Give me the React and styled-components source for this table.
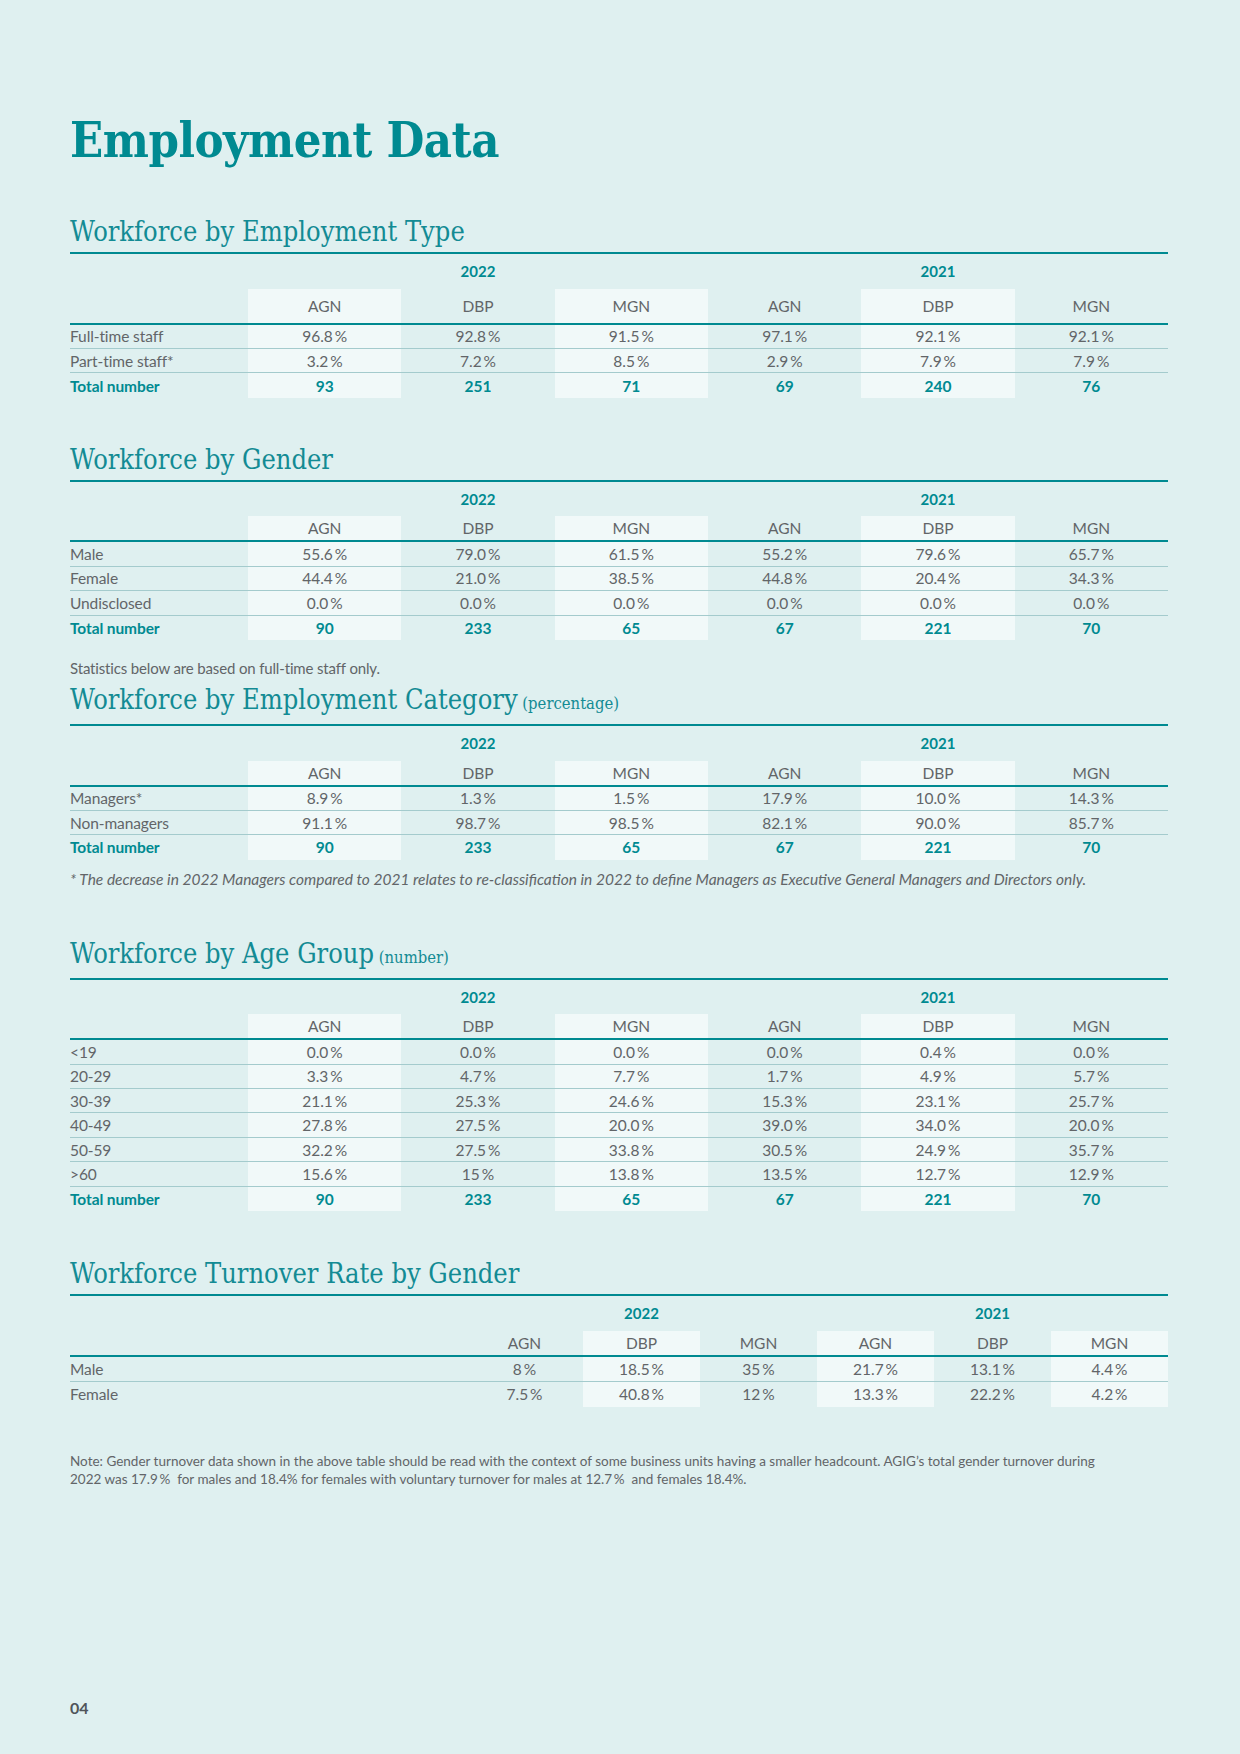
import React from 'react';
import styled, { createGlobalStyle } from 'styled-components';

const TEAL = '#008a91';
const TEXT = '#626568';

const GlobalStyle = createGlobalStyle`
  html, body {
    margin: 0;
    padding: 0;
    background: #dff0f0;
  }
  body {
    font-family: Lato, "Open Sans", sans-serif;
    -webkit-font-smoothing: antialiased;
  }
`;

const pct = (v) => `${v}\u2009%`;

const STD_COLS = '178px repeat(6, 1fr)';
const WIDE_COLS = '396px repeat(6, 1fr)';

const sections = [
  {
    gap: 49,
    title: 'Workforce by Employment Type',
    headH: 36,
    rows: [
      ['Full-time staff', ['96.8', '92.8', '91.5', '97.1', '92.1', '92.1'].map(pct)],
      ['Part-time staff*', ['3.2', '7.2', '8.5', '2.9', '7.9', '7.9'].map(pct)],
    ],
    total: ['93', '251', '71', '69', '240', '76'],
  },
  {
    gap: 47,
    title: 'Workforce by Gender',
    rows: [
      ['Male', ['55.6', '79.0', '61.5', '55.2', '79.6', '65.7'].map(pct)],
      ['Female', ['44.4', '21.0', '38.5', '44.8', '20.4', '34.3'].map(pct)],
      ['Undisclosed', ['0.0', '0.0', '0.0', '0.0', '0.0', '0.0'].map(pct)],
    ],
    total: ['90', '233', '65', '67', '221', '70'],
  },
  {
    gap: 19,
    lead: 'Statistics below are based on full-time staff only.',
    title: 'Workforce by Employment Category',
    unit: '(percentage)',
    rows: [
      ['Managers*', ['8.9', '1.3', '1.5', '17.9', '10.0', '14.3'].map(pct)],
      ['Non-managers', ['91.1', '98.7', '98.5', '82.1', '90.0', '85.7'].map(pct)],
    ],
    total: ['90', '233', '65', '67', '221', '70'],
    foot: '* The decrease in 2022 Managers compared to 2021 relates to re-classification in 2022 to define Managers as Executive General Managers and Directors only.',
  },
  {
    gap: 50,
    title: 'Workforce by Age Group',
    unit: '(number)',
    rows: [
      ['<19', ['0.0', '0.0', '0.0', '0.0', '0.4', '0.0'].map(pct)],
      ['20-29', ['3.3', '4.7', '7.7', '1.7', '4.9', '5.7'].map(pct)],
      ['30-39', ['21.1', '25.3', '24.6', '15.3', '23.1', '25.7'].map(pct)],
      ['40-49', ['27.8', '27.5', '20.0', '39.0', '34.0', '20.0'].map(pct)],
      ['50-59', ['32.2', '27.5', '33.8', '30.5', '24.9', '35.7'].map(pct)],
      ['>60', ['15.6', '15', '13.8', '13.5', '12.7', '12.9'].map(pct)],
    ],
    total: ['90', '233', '65', '67', '221', '70'],
  },
  {
    gap: 48,
    title: 'Workforce Turnover Rate by Gender',
    cols: WIDE_COLS,
    shadeOdd: true,
    rowH: 25,
    rows: [
      ['Male', ['8', '18.5', '35', '21.7', '13.1', '4.4'].map(pct)],
      ['Female', ['7.5', '40.8', '12', '13.3', '22.2', '4.2'].map(pct)],
    ],
  },
];

const UNITS = ['AGN', 'DBP', 'MGN', 'AGN', 'DBP', 'MGN'];

export default function App() {
  return (
    <Page>
      <GlobalStyle />
      <Title>Employment Data</Title>
      {sections.map((s) => (
        <Section key={s.title} $gap={s.gap}>
          {s.lead && <Lead>{s.lead}</Lead>}
          <Heading>
            {s.title}
            {s.unit && <Unit> {s.unit}</Unit>}
          </Heading>
          <DataTable section={s} />
          {s.foot && <Foot>{s.foot}</Foot>}
        </Section>
      ))}
      <Note>
        Note: Gender turnover data shown in the above table should be read with the context of some business units having a smaller headcount. AGIG’s total gender turnover during
        <br />
        2022 was 17.9&thinsp;%&nbsp; for males and 18.4% for females with voluntary turnover for males at 12.7&thinsp;% &nbsp;and females 18.4%.
      </Note>
      <PageNumber>04</PageNumber>
    </Page>
  );
}

function DataTable({ section }) {
  const cols = section.cols || STD_COLS;
  const shaded = (i) => (section.shadeOdd ? i % 2 === 1 : i % 2 === 0);
  const rowH = section.rowH || 24.4;
  const lastIdx = section.total ? -1 : section.rows.length - 1;

  return (
    <Table>
      <Row $cols={cols} $h={34.6}>
        <span />
        <Year>2022</Year>
        <Year>2021</Year>
      </Row>
      <HeadRow $cols={cols} $h={section.headH || 26}>
        <span />
        {UNITS.map((u, i) => (
          <Cell key={i} $shade={shaded(i)}>{u}</Cell>
        ))}
      </HeadRow>
      {section.rows.map(([label, vals], r) => (
        <DataRow key={label} $cols={cols} $h={rowH} $last={r === lastIdx}>
          <Label>{label}</Label>
          {vals.map((v, i) => (
            <Cell key={i} $shade={shaded(i)}>{v}</Cell>
          ))}
        </DataRow>
      ))}
      {section.total && (
        <DataRow $cols={cols} $h={rowH} $last>
          <Label $total>Total number</Label>
          {section.total.map((v, i) => (
            <Cell key={i} $shade={shaded(i)} $total>{v}</Cell>
          ))}
        </DataRow>
      )}
    </Table>
  );
}

/* ---------- Styled Components ---------- */
const Page = styled.div`
  box-sizing: border-box;
  width: 1240px;
  min-height: 1754px;
  padding: 111px 72px 36px 70px;
  display: flex;
  flex-direction: column;
  background: #dff0f0;
`;

const Title = styled.h1`
  margin: 0;
  font-family: "DejaVu Serif Condensed", "DejaVu Serif", serif;
  font-stretch: condensed;
  font-weight: 700;
  font-size: 48.5px;
  line-height: 57px;
  letter-spacing: -0.5px;
  color: ${TEAL};
`;

const Section = styled.section`
  margin-top: ${({ $gap }) => $gap}px;
`;

const Lead = styled.p`
  margin: 0 0 7px;
  font-size: 15px;
  line-height: 19px;
  color: ${TEXT};
  letter-spacing: -0.15px;
`;

const Heading = styled.h2`
  margin: 0;
  padding-bottom: 5px;
  border-bottom: 2px solid ${TEAL};
  font-family: "DejaVu Serif Condensed", "DejaVu Serif", serif;
  font-stretch: condensed;
  font-weight: 400;
  font-size: 27px;
  line-height: 30px;
  color: #138b94;
`;

const Unit = styled.span`
  font-size: 16.5px;
`;

const Table = styled.div`
  display: flex;
  flex-direction: column;
`;

const Row = styled.div`
  box-sizing: border-box;
  display: grid;
  grid-template-columns: ${({ $cols }) => $cols};
  height: ${({ $h }) => $h}px;
`;

const HeadRow = styled(Row)`
  border-bottom: 2px solid ${TEAL};
`;

const DataRow = styled(Row)`
  border-bottom: ${({ $last }) => ($last ? 'none' : '1px solid #a4cbcd')};
`;

const Year = styled.div`
  grid-column: span 3;
  display: flex;
  align-items: center;
  justify-content: center;
  font-weight: 700;
  font-size: 15px;
  color: ${TEAL};
`;

const Cell = styled.div`
  display: flex;
  align-items: center;
  justify-content: center;
  background: ${({ $shade }) => ($shade ? '#f1f9f9' : 'transparent')};
  font-size: 15.5px;
  font-weight: ${({ $total }) => ($total ? 700 : 400)};
  color: ${({ $total }) => ($total ? TEAL : TEXT)};
`;

const Label = styled.div`
  display: flex;
  align-items: center;
  font-size: 15.5px;
  font-weight: ${({ $total }) => ($total ? 700 : 400)};
  color: ${({ $total }) => ($total ? TEAL : TEXT)};
  letter-spacing: -0.1px;
`;

const Foot = styled.p`
  margin: 10px 0 0;
  font-size: 15.5px;
  line-height: 19px;
  font-style: italic;
  color: ${TEXT};
`;

const Note = styled.p`
  margin: 45px 0 0;
  font-size: 13.5px;
  line-height: 18px;
  color: ${TEXT};
  white-space: nowrap;
`;

const PageNumber = styled.div`
  margin-top: auto;
  font-size: 16px;
  line-height: 20px;
  font-weight: 700;
  color: #50555a;
`;
